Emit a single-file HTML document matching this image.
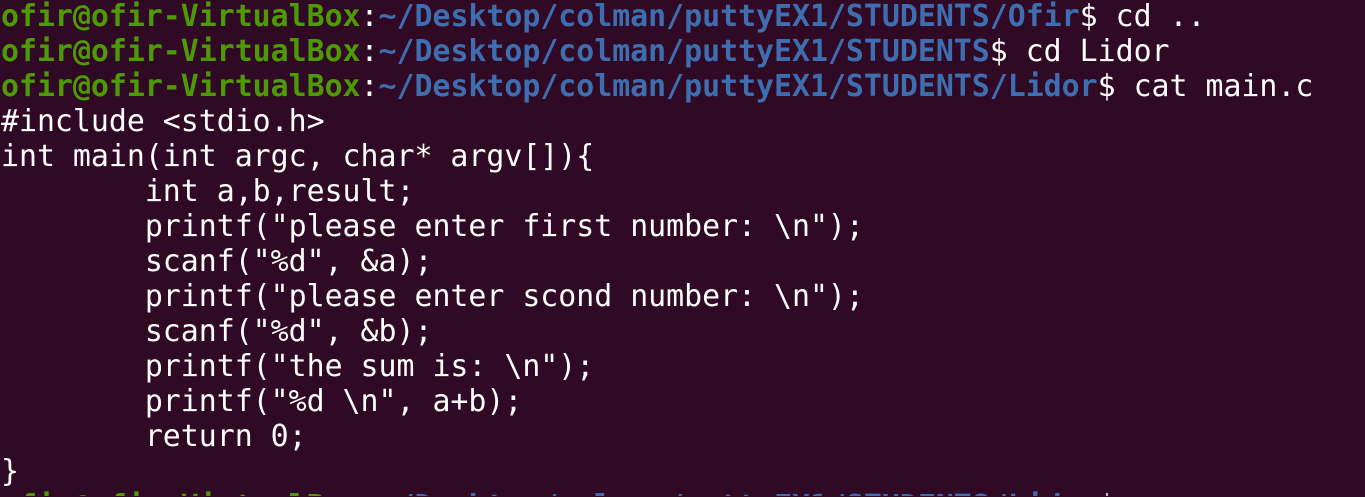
<!DOCTYPE html>
<html><head><meta charset="utf-8"><style>
html,body{margin:0;padding:0;width:1365px;height:497px;overflow:hidden;background:#300a24}
pre{margin:0;padding:0 0 0 1px;height:497px;overflow:hidden;font-family:"DejaVu Sans Mono","Liberation Mono",monospace;font-size:29.87px;line-height:35px;color:#ffffff;white-space:pre;tab-size:8;position:relative;top:-1px}
.g{color:#4e9a06;font-weight:bold}
.b{color:#3f6eb0;font-weight:bold}
</style></head><body><pre><span class="g">ofir@ofir-VirtualBox</span>:<span class="b">~/Desktop/colman/puttyEX1/STUDENTS/Ofir</span>$ cd ..
<span class="g">ofir@ofir-VirtualBox</span>:<span class="b">~/Desktop/colman/puttyEX1/STUDENTS</span>$ cd Lidor
<span class="g">ofir@ofir-VirtualBox</span>:<span class="b">~/Desktop/colman/puttyEX1/STUDENTS/Lidor</span>$ cat main.c
#include &lt;stdio.h&gt;
int main(int argc, char* argv[]){
        int a,b,result;
        printf("please enter first number: \n");
        scanf("%d", &amp;a);
        printf("please enter scond number: \n");
        scanf("%d", &amp;b);
        printf("the sum is: \n");
        printf("%d \n", a+b);
        return 0;
}
<span class="g">ofir@ofir-VirtualBox</span>:<span class="b">~/Desktop/colman/puttyEX1/STUDENTS/Lidor</span>$ </pre></body></html>
